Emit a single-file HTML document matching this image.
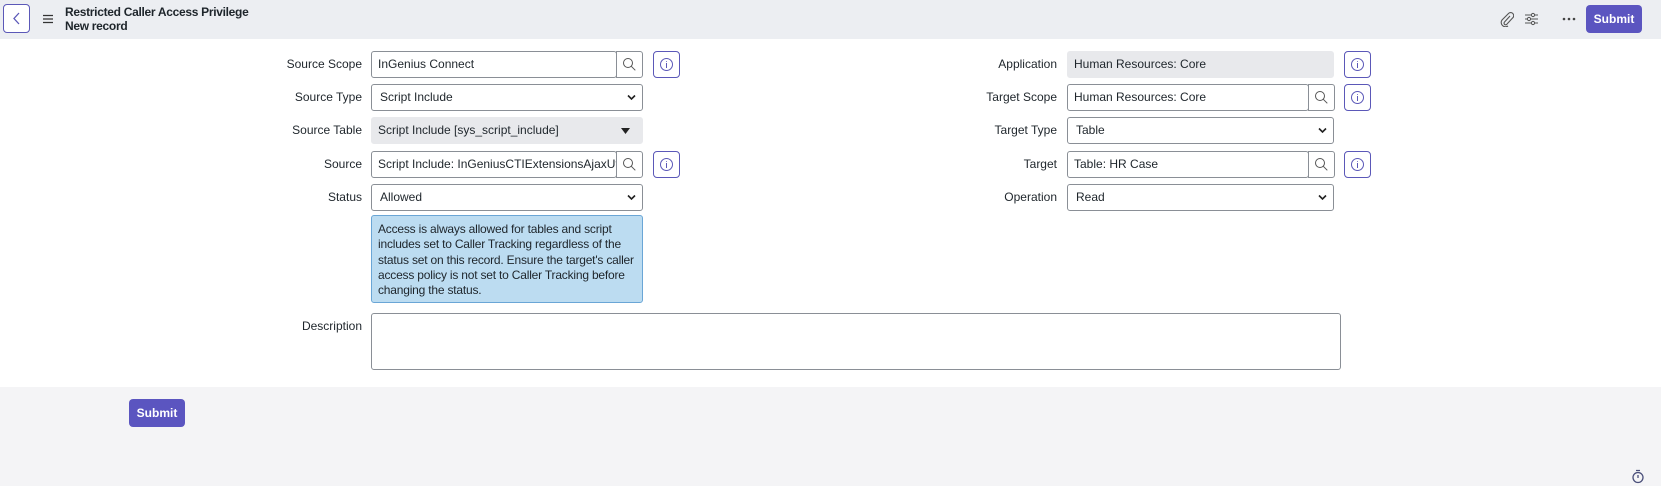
<!DOCTYPE html>
<html><head><meta charset="utf-8"><style>
*{box-sizing:border-box;margin:0;padding:0}
body{width:1661px;height:486px;background:#f4f4f6;font-family:"Liberation Sans",sans-serif;color:#1e252b;position:relative;overflow:hidden;font-size:12px}
.abs{position:absolute}
.hdr{left:0;top:0;width:1661px;height:39px;background:#eceef2}
.back{left:3px;top:4px;width:27px;height:29px;border:1px solid #5b58b8;border-radius:4px;background:#fff}
.title{left:65px;top:6px;font-weight:bold;font-size:12px;line-height:13.5px;letter-spacing:-0.3px}
.sub{left:129px;top:399px;width:56px;height:28px;background:#5b55c0;color:#fff;font-weight:bold;border-radius:4px;text-align:center;line-height:28px;font-size:12px}
.main{left:0;top:39px;width:1661px;height:348px;background:#fff}
.lbl{text-align:right;width:200px;line-height:27px;font-size:12px}
.inp{height:27px;border:1px solid #8a8f96;border-radius:3px;background:#fff;line-height:25px;padding-left:6px;font-size:12px;overflow:hidden;white-space:nowrap}
.ro{background:#e8e9ec;border-color:#e8e9ec}
.srch{width:27px;height:27px;border:1px solid #8a8f96;border-radius:0 3px 3px 0;background:#fff}
.info{width:27px;height:27px;border:1px solid #5b58b8;border-radius:4px;background:#fff}
.caret{position:absolute;right:6px;top:9px}
</style></head><body>
<div class="abs hdr"></div>
<div class="abs back"><svg width="25" height="27"><path d="M15 8l-5 5.5 5 5.5" stroke="#5b58b8" fill="none" stroke-width="1.3"/></svg></div>
<svg class="abs" style="left:42px;top:14px" width="12" height="10"><path d="M1 1.5h10M1 5h10M1 8.5h10" stroke="#333" stroke-width="1.2"/></svg>
<div class="abs title">Restricted Caller Access Privilege<br>New record</div>
<svg class="abs" style="left:1500px;top:11px" width="14" height="16"><path d="M10 5l-5.5 6a1.6 1.6 0 0 0 2.3 2.3l6-6.5a3 3 0 0 0-4.3-4.3L2 9a4.3 4.3 0 0 0 6 6" stroke="#555" fill="none" stroke-width="1.1"/></svg>
<svg class="abs" style="left:1524px;top:12px" width="15" height="14"><path d="M1 3h13M1 7h13M1 11h13" stroke="#555"/><circle cx="9" cy="3" r="1.6" fill="#eceef2" stroke="#555"/><circle cx="5" cy="7" r="1.6" fill="#eceef2" stroke="#555"/><circle cx="9" cy="11" r="1.6" fill="#eceef2" stroke="#555"/></svg>
<svg class="abs" style="left:1562px;top:17px" width="14" height="4"><circle cx="2" cy="2" r="1.3" fill="#444"/><circle cx="7" cy="2" r="1.3" fill="#444"/><circle cx="12" cy="2" r="1.3" fill="#444"/></svg>
<div class="abs sub" style="left:1586px;top:5px;height:28px">Submit</div>
<div class="abs main"></div>

<div class="abs lbl" style="left:162px;top:51px">Source Scope</div>
<div class="abs inp" style="left:371px;top:51px;width:246px">InGenius Connect</div>
<div class="abs srch" style="left:616px;top:51px"><svg width="25" height="25"><circle cx="11" cy="11" r="4.5" stroke="#555" fill="none"/><path d="M14.3 14.3l4 4" stroke="#555"/></svg></div>
<div class="abs info" style="left:653px;top:51px"><svg width="25" height="25"><circle cx="12.5" cy="12.5" r="6" stroke="#5b58b8" fill="none"/><path d="M12.5 11v5M12.5 9v.8" stroke="#5b58b8"/></svg></div>

<div class="abs lbl" style="left:162px;top:84px">Source Type</div>
<div class="abs inp" style="left:371px;top:84px;width:272px;padding-left:8px">Script Include<svg class="caret" width="9" height="7"><path d="M1 1.5l3.5 3.5 3.5-3.5" stroke="#222" stroke-width="1.6" fill="none"/></svg></div>

<div class="abs lbl" style="left:162px;top:117px">Source Table</div>
<div class="abs inp ro" style="left:371px;top:117px;width:272px">Script Include [sys_script_include]<svg class="caret" style="right:12px;top:10px" width="9" height="6"><path d="M0 0h9l-4.5 6z" fill="#222"/></svg></div>

<div class="abs lbl" style="left:162px;top:151px">Source</div>
<div class="abs inp" style="left:371px;top:151px;width:246px">Script Include: InGeniusCTIExtensionsAjaxUtil</div>
<div class="abs srch" style="left:616px;top:151px"><svg width="25" height="25"><circle cx="11" cy="11" r="4.5" stroke="#555" fill="none"/><path d="M14.3 14.3l4 4" stroke="#555"/></svg></div>
<div class="abs info" style="left:653px;top:151px"><svg width="25" height="25"><circle cx="12.5" cy="12.5" r="6" stroke="#5b58b8" fill="none"/><path d="M12.5 11v5M12.5 9v.8" stroke="#5b58b8"/></svg></div>

<div class="abs lbl" style="left:162px;top:184px">Status</div>
<div class="abs inp" style="left:371px;top:184px;width:272px;padding-left:8px">Allowed<svg class="caret" width="9" height="7"><path d="M1 1.5l3.5 3.5 3.5-3.5" stroke="#222" stroke-width="1.6" fill="none"/></svg></div>

<div class="abs" style="left:371px;top:215px;width:272px;height:88px;background:#bcdcf1;border:1px solid #6aa6d6;border-radius:3px;padding:6px 6px;font-size:12px;line-height:15.3px;letter-spacing:-0.2px">Access is always allowed for tables and script includes set to Caller Tracking regardless of the status set on this record. Ensure the target's caller access policy is not set to Caller Tracking before changing the status.</div>

<div class="abs lbl" style="left:162px;top:313px">Description</div>
<div class="abs inp" style="left:371px;top:313px;width:970px;height:57px"></div>

<div class="abs lbl" style="left:857px;top:51px">Application</div>
<div class="abs inp ro" style="left:1067px;top:51px;width:267px">Human Resources: Core</div>
<div class="abs info" style="left:1344px;top:51px"><svg width="25" height="25"><circle cx="12.5" cy="12.5" r="6" stroke="#5b58b8" fill="none"/><path d="M12.5 11v5M12.5 9v.8" stroke="#5b58b8"/></svg></div>

<div class="abs lbl" style="left:857px;top:84px">Target Scope</div>
<div class="abs inp" style="left:1067px;top:84px;width:242px">Human Resources: Core</div>
<div class="abs srch" style="left:1308px;top:84px"><svg width="25" height="25"><circle cx="11" cy="11" r="4.5" stroke="#555" fill="none"/><path d="M14.3 14.3l4 4" stroke="#555"/></svg></div>
<div class="abs info" style="left:1344px;top:84px"><svg width="25" height="25"><circle cx="12.5" cy="12.5" r="6" stroke="#5b58b8" fill="none"/><path d="M12.5 11v5M12.5 9v.8" stroke="#5b58b8"/></svg></div>

<div class="abs lbl" style="left:857px;top:117px">Target Type</div>
<div class="abs inp" style="left:1067px;top:117px;width:267px;padding-left:8px">Table<svg class="caret" width="9" height="7"><path d="M1 1.5l3.5 3.5 3.5-3.5" stroke="#222" stroke-width="1.6" fill="none"/></svg></div>

<div class="abs lbl" style="left:857px;top:151px">Target</div>
<div class="abs inp" style="left:1067px;top:151px;width:242px">Table: HR Case</div>
<div class="abs srch" style="left:1308px;top:151px"><svg width="25" height="25"><circle cx="11" cy="11" r="4.5" stroke="#555" fill="none"/><path d="M14.3 14.3l4 4" stroke="#555"/></svg></div>
<div class="abs info" style="left:1344px;top:151px"><svg width="25" height="25"><circle cx="12.5" cy="12.5" r="6" stroke="#5b58b8" fill="none"/><path d="M12.5 11v5M12.5 9v.8" stroke="#5b58b8"/></svg></div>

<div class="abs lbl" style="left:857px;top:184px">Operation</div>
<div class="abs inp" style="left:1067px;top:184px;width:267px;padding-left:8px">Read<svg class="caret" width="9" height="7"><path d="M1 1.5l3.5 3.5 3.5-3.5" stroke="#222" stroke-width="1.6" fill="none"/></svg></div>

<div class="abs sub">Submit</div>
<svg class="abs" style="left:1631px;top:469px" width="14" height="15"><circle cx="7" cy="8.5" r="5" stroke="#4a4f7a" fill="none" stroke-width="1.3"/><path d="M7 6v3M5 1.5h4" stroke="#4a4f7a" stroke-width="1.3"/></svg>
</body></html>
